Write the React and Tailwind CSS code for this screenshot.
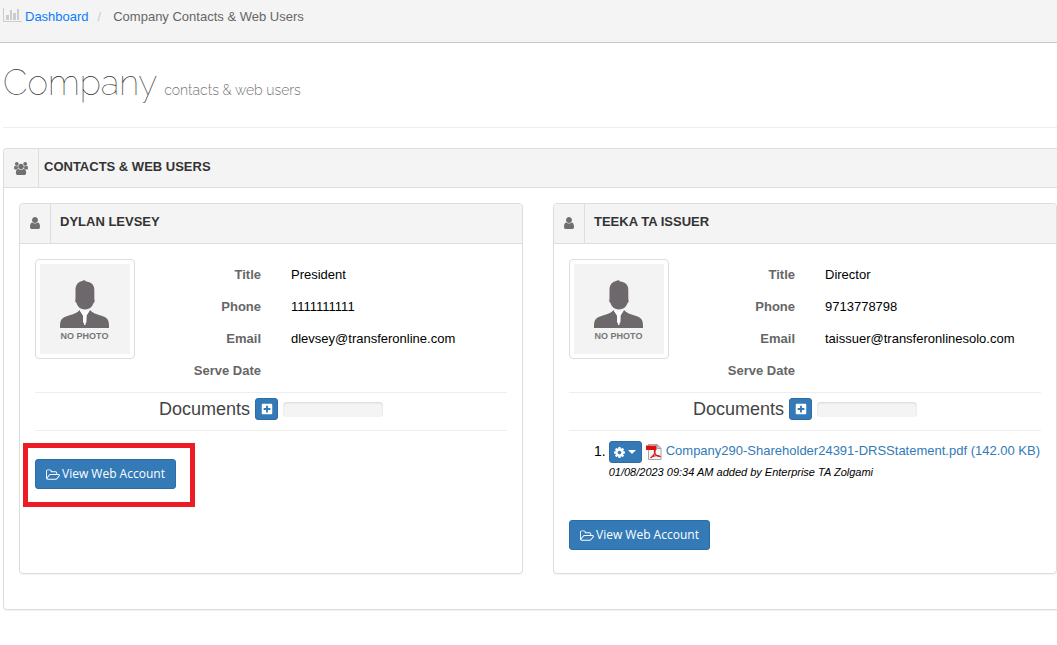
import { FaPlusSquare } from "react-icons/fa";

const userPath =
  "M1536 1399q0 109-62.5 187t-150.5 78h-854q-88 0-150.5-78t-62.5-187q0-85 8.5-160.5t31.5-152 58.5-131 94-89 134.5-34.5q131 128 313 128t313-128q76 0 134.5 34.5t94 89 58.5 131 31.5 152 8.5 160.5zm-256-887q0 159-112.5 271.5t-271.5 112.5-271.5-112.5-112.5-271.5 112.5-271.5 271.5-112.5 271.5 112.5 112.5 271.5z";
const usersPath =
  "M593 896q-162 5-265 128h-134q-82 0-138-40.5t-56-118.5q0-353 124-353 6 0 43.5 21t97.5 42.5 119 21.5q67 0 133-23-5 37-5 66 0 139 81 256zm1071 637q0 120-73 189.5t-194 69.5h-874q-121 0-194-69.5t-73-189.5q0-53 3.5-103.5t14-109 26.5-108.5 43-97.5 62-81 85.5-53.5 111.5-20q10 0 43 21.5t73 48 107 48 135 21.5 135-21.5 107-48 73-48 43-21.5q61 0 111.5 20t85.5 53.5 62 81 43 97.5 26.5 108.5 14 109 3.5 103.5zm-1024-1277q0 106-75 181t-181 75-181-75-75-181 75-181 181-75 181 75 75 181zm704 384q0 159-112.5 271.5t-271.5 112.5-271.5-112.5-112.5-271.5 112.5-271.5 271.5-112.5 271.5 112.5 112.5 271.5zm576 225q0 78-56 118.5t-138 40.5h-134q-103-123-265-128 81-117 81-256 0-29-5-66 66 23 133 23 59 0 119-21.5t97.5-42.5 43.5-21q124 0 124 353zm-128-609q0 106-75 181t-181 75-181-75-75-181 75-181 181-75 181 75 75 181z";
const folderPath =
  "M1781 1000q0-35-53-35h-1088q-40 0-85.5 21.5t-71.5 52.5l-294 363q-18 24-18 40 0 35 53 35h1088q40 0 86-22t71-53l294-363q18-22 18-39zm-1141-163h768v-160q0-40-28-68t-68-28h-576q-40 0-68-28t-28-68v-64q0-40-28-68t-68-28h-320q-40 0-68 28t-28 68v853l256-315q44-53 116-87.5t140-34.5zm1269 163q0 62-46 120l-295 363q-43 53-116 87.5t-140 34.5h-1088q-92 0-158-66t-66-158v-960q0-92 66-158t158-66h320q92 0 158 66t66 158v32h544q92 0 158 66t66 158v160h192q54 0 99 24.5t67 70.5q15 32 15 68z";
const cogPath =
  "M1152 896q0-106-75-181t-181-75-181 75-75 181 75 181 181 75 181-75 75-181zm512-109v222q0 12-8 23t-20 13l-185 28q-19 54-39 91 35 50 107 138 10 12 10 25t-9 23q-27 37-99 108t-94 71q-12 0-26-9l-138-108q-44 23-91 38-16 136-29 186-7 28-36 28h-222q-14 0-24.5-8.5t-11.5-21.5l-28-184q-49-16-90-37l-141 107q-10 9-25 9-14 0-25-11-126-114-165-168-7-10-7-23 0-12 8-23 15-21 51-66.5t54-70.5q-27-50-41-99l-183-27q-13-2-21-12.5t-8-23.5v-222q0-12 8-23t19-13l186-28q14-46 39-92-40-57-107-138-10-12-10-24 0-10 9-23 26-36 98.5-107.5t94.5-71.5q13 0 26 10l138 107q44-23 91-38 16-136 29-186 7-28 36-28h222q14 0 24.5 8.5t11.5 21.5l28 184q49 16 90 37l142-107q9-9 24-9 13 0 25 10 129 119 165 170 7 8 7 22 0 12-8 23-15 21-51 66.5t-54 70.5q26 50 41 98l183 28q13 2 21 12.5t8 23.5z";

function ChartIcon() {
  return (
    <svg viewBox="0 0 19 14" className="h-3.5 w-[19px] shrink-0 fill-[#cccccc]" aria-hidden="true">
      <path d="M0 0h1v13h18v1H0zM3 7h3v5H3zM7 2h2v10H7zM10 5h3v7h-3zM14 1h2v11h-2z" />
    </svg>
  );
}

function PdfIcon() {
  return (
    <svg viewBox="0 0 16 16" className="h-4 w-4 shrink-0" aria-hidden="true">
      <path d="M2.5.5h8.5l4 4v11H2.5z" fill="#f7f7f7" stroke="#a8a8a8" />
      <path d="M11 .5v4h4z" fill="#d8d8d8" stroke="#8a8a8a" strokeWidth=".7" />
      <path d="M0 1.500h10.500v4.500H0z" fill="#e01010" />
      <path
        d="M4.5 14C7 12.500 9.500 9 9.200 6.800 9 5.800 8 6.500 8.400 7.800 9 10.500 11.500 12.300 14 12.500 12.500 11 7 11.500 4.500 14z"
        fill="none"
        stroke="#d21515"
        strokeWidth="1.1"
      />
    </svg>
  );
}

function Portrait() {
  return (
    <div className="size-[100px] shrink-0 rounded border border-[#dddddd] bg-white p-1">
      <svg viewBox="0 0 90 90" className="block h-full w-full" role="img" aria-label="No photo">
        <rect width="90" height="90" fill="#f3f3f3" />
        <g fill="#6d686c">
          <path d="M35.500 35V25.500C35.500 19 40 17 45 16.200l1 1.300c5 .5 8.300 3 8.300 8V35c.9 1 .2 3.600-.9 4.300C52 43.500 49 45.500 45 45.500s-7-2-8.400-6.200c-1.100-.7-1.900-3.300-1.100-4.300z" />
          <path d="M20 64c0-7 .5-9.500 6-11.500 6-2.200 11-3 13.500-6.500L43 51.500 44 61h1.500l1-9.500L50 46c3 3.700 8.500 4.500 13.500 6.500C68.500 54.500 69 57 69 64z" />
        </g>
        <path d="M39.500 46 43 51.500V58l1.700 2L46.500 58v-6.500L50 46c-3 2-7.500 2-10.500 0z" fill="#fcfcfc" />
        <text x="44.500" y="74.500" textAnchor="middle" fontFamily="Liberation Sans, sans-serif" fontWeight="bold" fontSize="9" fill="#777777">
          NO PHOTO
        </text>
      </svg>
    </div>
  );
}

function AccountButton() {
  return (
    <button
      type="button"
      className="flex h-[30px] items-center gap-[2px] rounded-[3px] border border-[#2e6da4] bg-[#337ab7] px-[10px] font-['Open_Sans',sans-serif] text-xs leading-5 whitespace-nowrap text-white"
    >
      <svg viewBox="0 0 1920 1792" className="h-[13px] w-3.5 fill-current" aria-hidden="true">
        <path d={folderPath} />
      </svg>
      View Web Account
    </button>
  );
}

function DocumentRow({ file, meta }) {
  return (
    <ol className="list-none pl-[25px]">
      <li className="flex gap-[3px]">
        <span className="text-sm leading-5">1.</span>
        <div>
          <div className="flex items-center gap-1">
            <button
              type="button"
              aria-label="Document actions"
              className="flex h-[22px] w-[33px] items-center justify-center gap-[3px] rounded-[3px] border border-[#2e6da4] bg-[#337ab7] text-white"
            >
              <svg viewBox="128 128 1536 1536" className="size-[11px] fill-current" aria-hidden="true">
                <path d={cogPath} />
              </svg>
              <svg viewBox="0 0 8 4" className="h-1 w-2 fill-current" aria-hidden="true">
                <path d="M0 0h8L4 4z" />
              </svg>
            </button>
            <PdfIcon />
            <a href="#document" className="pb-[3px] text-[13px] leading-[19px] whitespace-nowrap text-[#337ab7]">
              {file}
            </a>
          </div>
          <p className="text-[11px] leading-[18px] italic">{meta}</p>
        </div>
      </li>
    </ol>
  );
}

function ContactCard({ name, fields, document, highlighted }) {
  return (
    <article className="flex min-h-[371px] flex-col rounded border border-[#dddddd] bg-white shadow-[0_1px_1px_rgba(0,0,0,0.05)]">
      <header className="flex h-10 items-stretch rounded-t border-b border-[#dddddd] bg-[#f4f4f4]">
        <span className="flex w-[31px] items-center justify-center border-r border-[#dddddd] pb-px">
          <svg viewBox="256 128 1280 1536" className="h-3 w-2.5 fill-[#707070]" aria-hidden="true">
            <path d={userPath} />
          </svg>
        </span>
        <h3 className="px-[9px] text-[13px] leading-9 font-bold text-[#333333]">{name}</h3>
      </header>
      <div className="flex flex-1 flex-col px-[15px] pt-[15px]">
        <div className="flex gap-[26px]">
          <Portrait />
          <dl className="grid grid-cols-[100px_1fr] content-start gap-x-[30px] text-[13px]">
            {fields.map(([label, value]) => (
              <div key={label} className="contents leading-8">
                <dt className="text-right font-bold text-[#666666]">{label}</dt>
                <dd>{value}</dd>
              </div>
            ))}
          </dl>
        </div>
        <div className="mt-[5px] flex h-[39px] items-center justify-center gap-[5px] border-y border-[#eeeeee] pb-[5px]">
          <h4 className="text-lg leading-5 text-[#444444]">Documents</h4>
          <button
            type="button"
            aria-label="Add document"
            className="flex h-[22px] w-[23px] items-center justify-center rounded-[3px] border border-[#2e6da4] bg-[#337ab7] text-white"
          >
            <FaPlusSquare className="size-3" />
          </button>
          <div className="h-[15px] w-[100px] rounded bg-[#f4f4f4] shadow-[inset_0_1px_2px_rgba(0,0,0,0.12)]" />
        </div>
        {document && (
          <div className="mt-[10px] mb-[39px]">
            <DocumentRow {...document} />
          </div>
        )}
        <div className="flex">
          {highlighted ? (
            <div className="-ml-3 mt-3 border-5 border-[#ed1c24] pt-[11px] pr-[14px] pb-[13px] pl-[7px]">
              <AccountButton />
            </div>
          ) : (
            <AccountButton />
          )}
        </div>
      </div>
    </article>
  );
}

const contacts = [
  {
    name: "DYLAN LEVSEY",
    fields: [
      ["Title", "President"],
      ["Phone", "1111111111"],
      ["Email", "dlevsey@transferonline.com"],
      ["Serve Date", ""],
    ],
    highlighted: true,
  },
  {
    name: "TEEKA TA ISSUER",
    fields: [
      ["Title", "Director"],
      ["Phone", "9713778798"],
      ["Email", "taissuer@transferonlinesolo.com"],
      ["Serve Date", ""],
    ],
    document: {
      file: "Company290-Shareholder24391-DRSStatement.pdf (142.00 KB)",
      meta: "01/08/2023 09:34 AM added by Enterprise TA Zolgami",
    },
  },
];

export default function App() {
  return (
    <div className="min-h-screen bg-white font-['Liberation_Sans',Arial,sans-serif] text-[13px] text-black">
      <nav aria-label="Breadcrumb" className="flex h-[43px] items-start border-b border-[#c8c8c8] bg-[#f4f4f4] px-[3px] pt-2 leading-[18px]">
        <ChartIcon />
        <a href="#dashboard" className="ml-[3px] text-[#0a7cff]">
          Dashboard
        </a>
        <span className="ml-[9px] text-[#cccccc]">/</span>
        <span className="ml-3 text-[#666666]">Company Contacts &amp; Web Users</span>
      </nav>
      <main className="pl-[3px]">
        <h1 className="flex h-[85px] items-baseline gap-[7px] border-b border-[#eeeeee] pt-4 font-['Raleway','Lato',sans-serif] text-[35px] leading-[48px] font-thin text-[#333333]">
          Company
          <small className="text-sm font-light text-[#777777]">contacts &amp; web users</small>
        </h1>
        <section className="mt-5 rounded-l border border-r-0 border-[#dddddd] shadow-[0_1px_1px_rgba(0,0,0,0.05)]">
          <header className="flex h-[39px] items-stretch rounded-tl border-b border-[#dddddd] bg-[#f4f4f4]">
            <span className="flex w-[35px] items-center justify-center border-r border-[#dddddd]">
              <svg viewBox="0 0 1920 1792" className="h-[13px] w-3.5 fill-[#707070]" aria-hidden="true">
                <path d={usersPath} />
              </svg>
            </span>
            <h2 className="px-[5px] text-[13px] leading-9 font-bold text-[#333333]">CONTACTS &amp; WEB USERS</h2>
          </header>
          <div className="grid grid-cols-2 gap-[30px] pt-[15px] pb-[35px] pl-[15px]">
            {contacts.map((contact) => (
              <ContactCard key={contact.name} {...contact} />
            ))}
          </div>
        </section>
      </main>
    </div>
  );
}
